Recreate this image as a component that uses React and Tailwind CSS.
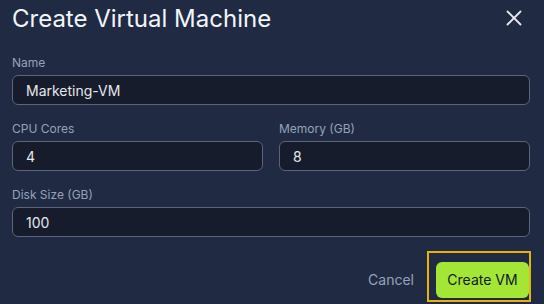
import React from 'react';
import { X } from 'lucide-react';

const Field = ({ label, value }) => (
  <div className="flex flex-col">
    <label className="text-xs leading-4 text-[#94a3b8] mb-1">{label}</label>
    <input
      defaultValue={value}
      className="h-[30px] w-full rounded-md border border-[#5b6479] bg-[#161c2c] px-[13px] text-sm text-[#e5e7eb] outline-none"
    />
  </div>
);

const App = () => {
  return (
    <div
      className="w-[544px] h-[304px] overflow-hidden bg-[#212a43] pl-3 pr-[14px] pt-[3px]"
      style={{ fontFamily: 'Inter, "Noto Sans", sans-serif' }}
    >
      {/* Header */}
      <div className="flex items-center justify-between">
        <h2 className="text-2xl leading-8 font-normal text-[#f1f5f9]">Create Virtual Machine</h2>
        <button className="mr-[3px] -mt-[3px] text-[#e5e7eb]">
          <X size={26} strokeWidth={1.7} />
        </button>
      </div>

      {/* Form */}
      <div className="mt-5 flex flex-col gap-4">
        <Field label="Name" value="Marketing-VM" />
        <div className="grid grid-cols-2 gap-4">
          <Field label="CPU Cores" value="4" />
          <Field label="Memory (GB)" value="8" />
        </div>
        <Field label="Disk Size (GB)" value="100" />
      </div>

      {/* Footer */}
      <div className="mt-[14px] flex items-end justify-end gap-px -mr-px">
        <button className="mb-1 px-3 py-2 text-sm leading-5 text-[#94a3b8]">Cancel</button>
        <div className="border-2 border-[#e6b20e] pl-[7px] pt-[9px] pb-[2px]">
          <button className="h-9 w-[93px] rounded-md bg-[#a3e635] text-sm text-[#111827]">Create VM</button>
        </div>
      </div>
    </div>
  );
};

export default App;
